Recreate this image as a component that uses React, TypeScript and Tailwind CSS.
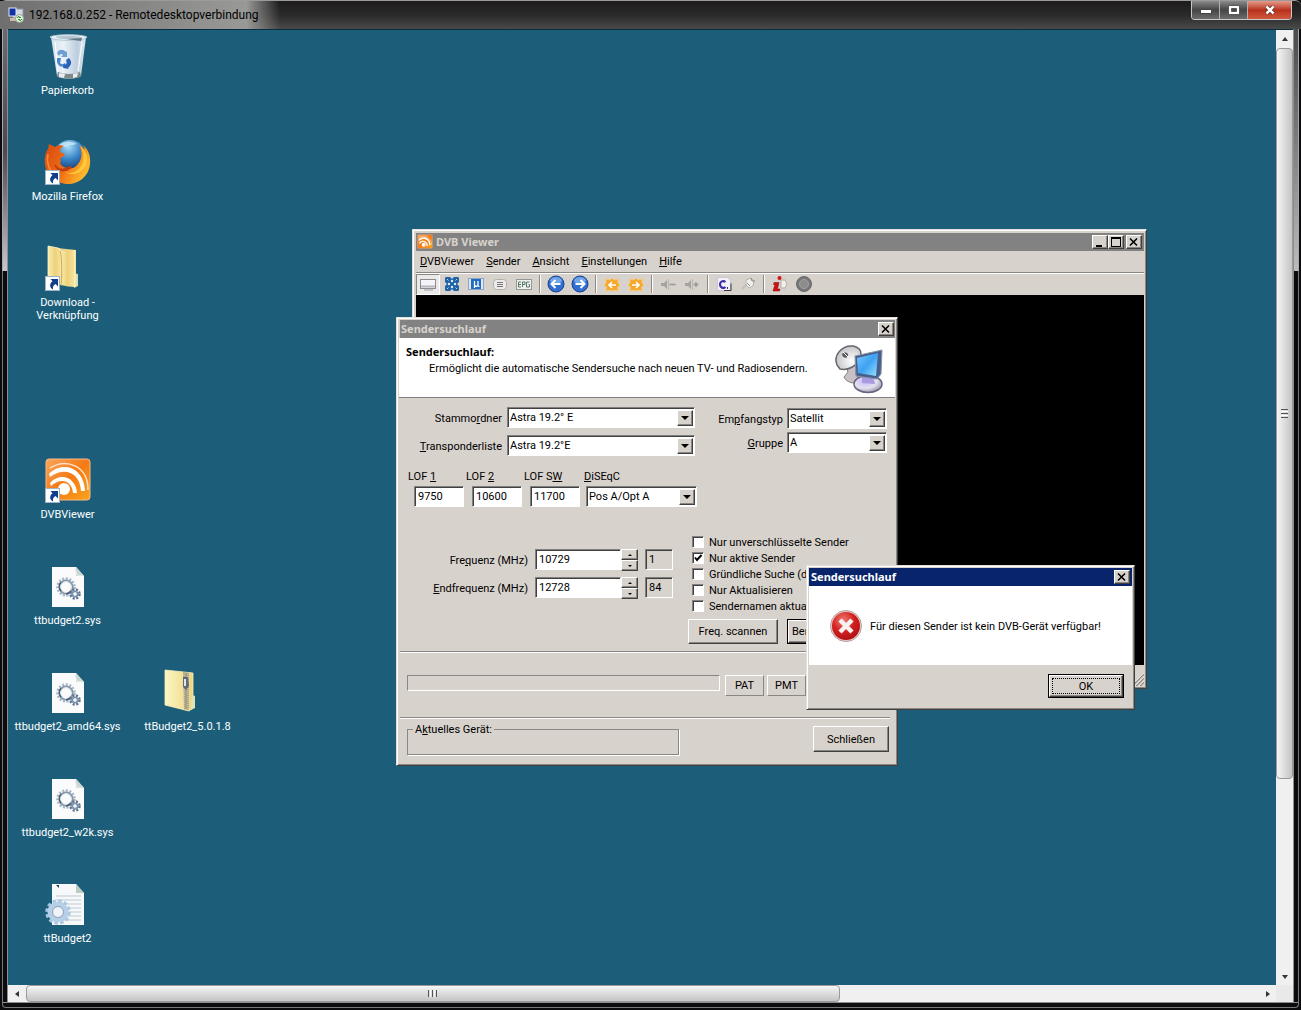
import React from "react";

const RAISED =
  "border border-t-white border-l-white border-r-[#404040] border-b-[#404040] shadow-[inset_-1px_-1px_0_#8a8681] bg-[#d8d2cc]";
const SUNKEN =
  "border border-t-[#808080] border-l-[#808080] border-r-white border-b-white shadow-[inset_1px_1px_0_#404040]";
const WINDOW =
  "absolute flex flex-col bg-[#d8d2cc] border border-t-[#e4e0dc] border-l-[#e4e0dc] border-r-[#404040] border-b-[#404040] shadow-[inset_1px_1px_0_#fff,inset_-1px_-1px_0_#8a8681] p-[2px]";
const BOLD = "font-['Noto_Sans','Liberation_Sans',sans-serif] font-bold";

/* Text with one underlined access key */
function Mn({ t, k }: { t: string; k: number }) {
  return (
    <span className="whitespace-pre">
      {t.slice(0, k)}
      <span className="underline underline-offset-1">{t[k]}</span>
      {t.slice(k + 1)}
    </span>
  );
}

/* ---------- desktop icons ---------- */

function ShortcutArrow() {
  return (
    <g>
      <rect x="1.5" y="31.500" width="14" height="14" fill="#fff" stroke="#9db4c4" />
      <path d="M6.500 34H14v7.500l-2.400-2.400c-2.300 1.200-3 3-2.500 5.400-3.400-1.500-4.200-5.600-.6-8.300z" fill="#123f8c" />
    </g>
  );
}

function BinIcon() {
  return (
    <svg viewBox="0 0 48 48" className="size-12">
      <defs>
        <linearGradient id="bin" x1="0" x2="1">
          <stop offset="0" stopColor="#d5e3ef" />
          <stop offset=".35" stopColor="#f4f8fc" />
          <stop offset=".75" stopColor="#c3d2e2" />
          <stop offset="1" stopColor="#e4edf4" />
        </linearGradient>
      </defs>
      <path d="M7 4l35 0-5 39c-4 3.500-20 3.500-24 0z" fill="url(#bin)" opacity=".96" />
      <path d="M14 39c5 2.500 17 2.500 22 0l1 4c-4 3.500-20 3.500-24 0z" fill="#7f8a8b" />
      <path d="M15 40l6 1-1 4-5-1zM29 41l5-1-1 4-4 1z" fill="#e9eef0" />
      <path d="M6 4c4-3 32-3 37 0-1 4-33 5-37 0z" fill="#eef5fa" stroke="#b1c4d4" />
      <path d="M11 4c5-1.500 22-2 28 .500-6 2.500-23 2.500-28-.5z" fill="#b4c6d3" />
      <path d="M22 6l16-1-1 3z" fill="#63767e" />
      <path d="M11 9l3 30M38 9l-4 29" stroke="#fff" strokeWidth="1.500" opacity=".8" />
      <path d="M13 20c2-4 6-4 9-1l1-1 0 6-6 0 2-2c-2-2-3-1-4 1z" fill="#6e9fd2" />
      <path d="M13 25l4 0-1 5c2 2 4 1 5 0l1 3c-4 2-8 0-9-4z" fill="#4a86cc" />
      <path d="M22 27l3-2c3 3 3 7-1 10l1 1-6-1 1-5 1 2c2-1 2-3 1-5z" fill="#2a62b8" />
    </svg>
  );
}

function FirefoxIcon() {
  return (
    <svg viewBox="0 0 48 48" className="size-12">
      <defs>
        <radialGradient id="globe" cx=".45" cy=".2" r=".8">
          <stop offset="0" stopColor="#a8dcf5" />
          <stop offset=".45" stopColor="#3a86c8" />
          <stop offset="1" stopColor="#10285f" />
        </radialGradient>
        <linearGradient id="fox" x1="0" y1="0" x2="1" y2=".4">
          <stop offset="0" stopColor="#d64a12" />
          <stop offset=".55" stopColor="#ef6c14" />
          <stop offset="1" stopColor="#fdb62b" />
        </linearGradient>
      </defs>
      <circle cx="26" cy="18" r="17" fill="url(#globe)" />
      <path d="M15 6c5-4 13-4 18-1-3 0-4 2-8 1-2 3-7 2-10 0z" fill="#d5effa" opacity=".7" />
      <path
        d="M5 5c2 1 4 2 6 3 3-2 6-2 9-1-3 1-4 3-4 6l5 2c-1 3-4 3-5 5 1 2 1 3 0 4 3 6 13 8 18 1 5-6 4-14 1-19 3 1 4 3 5 5 1-2 0-3-1-5 5 4 8 11 7 19-1 12-11 20-22 20C12 45 2 36 1 25 0 19 2 12 4 10z"
        fill="url(#fox)"
      />
      <path d="M36 7c5 7 5 17-1 23-4 4-10 5-14 3 7 4 15 2 20-5 4-7 2-16-5-21z" fill="#fdc93b" />
      <path d="M11 25c3 5 8 6 12 3 2-1 4-1 5 0-3 4-9 6-14 3-3-2-4-4-3-6z" fill="#c23c0d" />
      <path d="M4 15c-2 8 1 17 8 22" stroke="#f98a3a" strokeWidth="1.500" fill="none" />
      <ShortcutArrow />
    </svg>
  );
}

function FolderLinkIcon() {
  return (
    <svg viewBox="0 0 48 48" className="size-12">
      <defs>
        <linearGradient id="ff" x1="0" x2="1">
          <stop offset="0" stopColor="#fbeeb0" />
          <stop offset=".5" stopColor="#edd27c" />
          <stop offset="1" stopColor="#f7e6a0" />
        </linearGradient>
      </defs>
      <path d="M4 2l28 3v36l-28-4z" fill="#e7cf86" />
      <path d="M29 28l5 1v12l-4 2z" fill="#d9e0ad" />
      <path d="M4 1l10 2c3 1 4 4 4 8v29L4 36z" fill="url(#ff)" stroke="#fdf5cd" strokeWidth=".8" />
      <path d="M16 6l15-1v37c-5 0-9-1-14-2z" fill="url(#ff)" />
      <path d="M16 6c2 3 2 30 1 34" stroke="#c9a95a" fill="none" />
      <path d="M31 5v37" stroke="#fff6cf" />
      <ShortcutArrow />
    </svg>
  );
}

function ZipIcon() {
  return (
    <svg viewBox="0 0 48 48" className="size-12">
      <defs>
        <linearGradient id="zp" x1="0" x2="1">
          <stop offset="0" stopColor="#fdf6c4" />
          <stop offset="1" stopColor="#edd57f" />
        </linearGradient>
      </defs>
      <path d="M1 1l28 3v35l-4 3-24-6z" fill="url(#zp)" stroke="#fbf0bd" strokeWidth=".8" />
      <path d="M28 26l3 1v12l-4 2z" fill="#dfe4b5" />
      <path d="M19 3l6 1v37l-5-1z" fill="#a5a087" />
      <path d="M20 4v35M24 5v35" stroke="#efe6b8" strokeWidth="1" strokeDasharray="1 1" />
      <path d="M19 8h5l1 9-3 4-3-3z" fill="#5f6a78" />
      <path d="M20 10h2v7h-2z" fill="#dfe6ee" />
    </svg>
  );
}

function DvbIcon({ small }: { small?: boolean }) {
  return (
    <svg viewBox="0 0 48 48" className={small ? "size-4" : "size-12"}>
      <defs>
        <linearGradient id={small ? "dvs" : "dvl"} x1="0" y1="0" x2="1" y2="1">
          <stop offset="0" stopColor="#f9a65e" />
          <stop offset=".5" stopColor="#f47a14" />
          <stop offset="1" stopColor="#fba41c" />
        </linearGradient>
      </defs>
      <rect x="2" y="2" width="44" height="41" rx="3" fill={small ? "url(#dvs)" : "url(#dvl)"} stroke="#f7b98a" strokeWidth="1" />
      <path d="M5 17C17 4 40 9 41 34l-4 0C36 14 19 10 6 20z" fill="#fff" />
      <path d="M6 26C16 15 32 20 33 36l-4 0C28 24 17 20 7 29z" fill="#fff" />
      <path d="M6 11C22 1 44 8 44 33" stroke="#fde0c8" strokeWidth="1.500" fill="none" />
      <circle cx="20" cy="32" r="6" fill="#fff" />
      {!small && <ShortcutArrow />}
    </svg>
  );
}

function Gear({ x, y, r, c, d }: { x: number; y: number; r: number; c: string; d: string }) {
  return (
    <g fill="none">
      <circle cx={x} cy={y} r={r + 1.5} stroke={c} strokeWidth="2.500" strokeDasharray="2 1.600" />
      <circle cx={x} cy={y} r={r - 0.6} stroke={d} strokeWidth="2.400" />
      <circle cx={x} cy={y} r={r - 1.6} stroke="#e9f0f5" strokeWidth="1" />
    </g>
  );
}

function SysIcon() {
  return (
    <svg viewBox="0 0 48 48" className="size-12">
      <path d="M8 4h24l8 9v31H8z" fill="#fbfbfc" />
      <path d="M32 4l8 9h-8z" fill="#c9d6cf" />
      <path d="M31 5l2 7 6 1" fill="none" stroke="#e4ece8" />
      <Gear x={22} y={24} r={7} c="#a3b6c4" d="#8596ab" />
      <path d="M17 19a7 7 0 0 0 0 9M22 31a7 7 0 0 0 5-3" stroke="#4c5b70" strokeWidth="1.500" fill="none" />
      <Gear x={31} y={31} r={3} c="#5e7190" d="#7e93ae" />
    </svg>
  );
}

function InfIcon() {
  return (
    <svg viewBox="0 0 48 48" className="size-12">
      <path d="M8 3h24l8 9v32H8z" fill="#f6f8fa" />
      <path d="M32 3l8 9h-8z" fill="#bccbbf" />
      <path d="M12 15h25M12 19h25M12 23h25M12 27h25M12 31h25M12 35h25M12 39h25" stroke="#bcc8d2" />
      <path d="M12 4h3v3z" fill="#2b3a52" />
      <circle cx="14" cy="31" r="11" fill="none" stroke="#a9c6e0" strokeWidth="3.500" strokeDasharray="3.400 2.350" />
      <circle cx="14" cy="31" r="8" fill="#e6eef6" stroke="#b4cfe6" strokeWidth="5" />
      <circle cx="14" cy="31" r="5.500" fill="#f0f4f8" stroke="#8c9cc0" />
    </svg>
  );
}

const ICONS: { label: string; pos: string; icon: React.ReactNode }[] = [
  { label: "Papierkorb", pos: "col-start-1 row-start-1", icon: <BinIcon /> },
  { label: "Mozilla Firefox", pos: "col-start-1 row-start-2", icon: <FirefoxIcon /> },
  { label: "Download - Verknüpfung", pos: "col-start-1 row-start-3", icon: <FolderLinkIcon /> },
  { label: "DVBViewer", pos: "col-start-1 row-start-5", icon: <DvbIcon /> },
  { label: "ttbudget2.sys", pos: "col-start-1 row-start-6", icon: <SysIcon /> },
  { label: "ttbudget2_amd64.sys", pos: "col-start-1 row-start-7", icon: <SysIcon /> },
  { label: "ttBudget2_5.0.1.8", pos: "col-start-2 row-start-7", icon: <ZipIcon /> },
  { label: "ttbudget2_w2k.sys", pos: "col-start-1 row-start-8", icon: <SysIcon /> },
  { label: "ttBudget2", pos: "col-start-1 row-start-9", icon: <InfIcon /> },
];

function DesktopIcons() {
  return (
    <div className="grid auto-cols-[119px] grid-rows-[repeat(9,106px)] gap-x-px justify-start pt-[3px]">
      {ICONS.map((i) => (
        <button key={i.label} className={`flex flex-col items-center justify-start gap-[3px] text-white ${i.pos}`}>
          {i.icon}
          <span className={i.label.startsWith("Download") ? "w-16 leading-[13px]" : "whitespace-nowrap leading-[13px]"}>{i.label}</span>
        </button>
      ))}
    </div>
  );
}

/* ---------- classic caption buttons ---------- */

function CaptionButton({ kind, label }: { kind: "min" | "max" | "close"; label: string }) {
  return (
    <button aria-label={label} className={`flex h-[14px] w-4 items-center justify-center ${RAISED}`}>
      <svg viewBox="0 0 12 10" className="h-[10px] w-3" shapeRendering="crispEdges">
        {kind === "min" && <path d="M2 8h6v2H2z" />}
        {kind === "max" && <path d="M1 0h10v10H1zM2 2v7h8V2z" fillRule="evenodd" />}
        {kind === "close" && <path d="M2 1.500l7 7M9 1.500l-7 7" stroke="#000" strokeWidth="1.600" shapeRendering="auto" />}
      </svg>
    </button>
  );
}

/* ---------- DVB Viewer window ---------- */

function Sep() {
  return <span className="mx-[3px] h-[18px] w-[2px] border-l border-l-[#8a8681] border-r border-r-white" />;
}

function Arrow({ left }: { left?: boolean }) {
  return (
    <svg viewBox="0 0 18 18" className="size-[18px]">
      <circle cx="9" cy="9" r="8" fill="#2f6fd0" stroke="#1c3f95" />
      <ellipse cx="9" cy="5.500" rx="6" ry="3.500" fill="#8dbcf2" opacity=".7" />
      <path d={left ? "M13.500 9H5M8.500 5L4.500 9l4 4" : "M4.500 9H13M9.500 5l4 4-4 4"} stroke="#fff" strokeWidth="2" fill="none" />
    </svg>
  );
}

function Star({ left }: { left?: boolean }) {
  return (
    <svg viewBox="0 0 18 18" className="size-[18px]">
      <path d="M3 4l4 1L9 3l2 2 4-1v4l2 2-2.500 2 .5 4-4-1-2 1-2-1-4 1 .5-4L1 10l2-2z" fill="#f5a828" stroke="#f6c878" />
      <path d={left ? "M13 10H6M9 7l-3 3 3 3" : "M5 10h7M9 7l3 3-3 3"} stroke="#fff" strokeWidth="1.700" fill="none" />
    </svg>
  );
}

function Speaker({ plus }: { plus?: boolean }) {
  return (
    <svg viewBox="0 0 18 18" className="size-[18px]">
      <path d="M2 8h3l3-3v9l-3-3H2z" fill="#a5a29e" />
      <path d="M9.500 4v11" stroke="#b8b5b1" />
      <path d={plus ? "M10.500 9.500h5M13 7v5" : "M10.500 9.500h6"} stroke="#9a9793" strokeWidth="1.500" />
    </svg>
  );
}

const TOOLS: { label: string; on?: boolean; icon: React.ReactNode | null }[] = [
  {
    label: "Anzeige",
    on: true,
    icon: (
      <svg viewBox="0 0 18 18" className="size-[18px]">
        <rect x="1.500" y="4.500" width="15" height="9" fill="#f4f4f6" stroke="#8b8b93" />
        <path d="M2 11.500h14" stroke="#b5b5bd" strokeWidth="2" />
        <path d="M5 15h9" stroke="#9a9aa0" />
      </svg>
    ),
  },
  {
    label: "Vollbild",
    icon: (
      <svg viewBox="0 0 18 18" className="size-[18px]">
        <path d="M3 2h4l2 2 2-2h4l1 1v4l-2 2 2 2v4l-1 1h-4l-2-2-2 2H3l-1-1v-4l2-2-2-2V3z" fill="#1f62a8" />
        <circle cx="9" cy="6" r="1.200" fill="#e2ecf5" />
        <circle cx="9" cy="12" r="1.200" fill="#e2ecf5" />
        <circle cx="6" cy="9" r="1.200" fill="#e2ecf5" />
        <circle cx="12" cy="9" r="1.200" fill="#e2ecf5" />
        <path d="M4 4l1.500 1.500M14 4l-1.500 1.500M4 14l1.500-1.500M14 14l-1.500-1.500" stroke="#b9d2e8" />
      </svg>
    ),
  },
  {
    label: "Mini",
    icon: (
      <svg viewBox="0 0 18 18" className="size-[18px]">
        <rect x="1.500" y="3.500" width="15" height="11" fill="#dfe8f4" stroke="#8ea4c4" />
        <rect x="4" y="4" width="10" height="10" fill="#1f6bc0" />
        <path d="M7.500 6v7M7.500 10.500c1 1 3 1 3.500 0V6v5l1.500.500" stroke="#fff" strokeWidth="1.300" fill="none" />
      </svg>
    ),
  },
  {
    label: "Untertitel",
    icon: (
      <svg viewBox="0 0 18 18" className="size-[18px]">
        <rect x="2.500" y="4.500" width="13" height="10" rx="3" fill="#ecebea" stroke="#b3afab" />
        <path d="M6 7.500h6M6 9.500h6M6 11.500h6" stroke="#77747a" />
      </svg>
    ),
  },
  {
    label: "Programmführer",
    icon: (
      <svg viewBox="0 0 18 18" className="size-[18px]">
        <rect x="1.500" y="4.500" width="15" height="10" fill="#eef1ee" stroke="#8f9a94" />
        <path d="M6 7H3.500v5H6M3.500 9.500H6M7.500 12V7H10v2.500H7.500M14.500 7h-3v5h3V9.500h-1" stroke="#59786c" fill="none" />
      </svg>
    ),
  },
  { label: "", icon: null },
  { label: "Zurück", icon: <Arrow left /> },
  { label: "Vor", icon: <Arrow /> },
  { label: "", icon: null },
  { label: "Favorit zurück", icon: <Star left /> },
  { label: "Favorit vor", icon: <Star /> },
  { label: "", icon: null },
  { label: "Leiser", icon: <Speaker /> },
  { label: "Lauter", icon: <Speaker plus /> },
  { label: "", icon: null },
  {
    label: "Teletext",
    icon: (
      <svg viewBox="0 0 18 18" className="size-[18px]">
        <path d="M2.500 2.500h10l3 3v10h-13z" fill="#f3f1fa" stroke="#c9c5d5" />
        <path d="M10.500 7C8 5 5 6.500 5 9.500S8.500 14 10.500 12" stroke="#3b2ba8" strokeWidth="2.200" fill="none" />
        <path d="M12.500 12v2M9 15.500h7v-7" stroke="#35333c" fill="none" />
      </svg>
    ),
  },
  {
    label: "Optionen",
    icon: (
      <svg viewBox="0 0 18 18" className="size-[18px]">
        <path d="M3 14l5-5" stroke="#c2bfbb" strokeWidth="2" />
        <path d="M7 5l5-2 3 3-1 5-4 2-3-3z" fill="#f1efed" stroke="#b6b2ae" />
        <path d="M12 3l1 3 3 0M8 8l3 3" stroke="#8d8985" fill="none" />
      </svg>
    ),
  },
  { label: "", icon: null },
  {
    label: "Information",
    icon: (
      <svg viewBox="0 0 18 18" className="size-[18px]">
        <path d="M10 5l4 0 2 4-2 4-4 0z" fill="#f2eeec" stroke="#b3aeaa" />
        <circle cx="8.500" cy="3" r="2" fill="#d01212" />
        <path d="M3 7.500h5L6.500 14H9l-.5 2H2l2-6.500H2.500z" fill="#d01212" stroke="#7c0808" strokeWidth=".5" />
      </svg>
    ),
  },
  {
    label: "Aufnahme",
    icon: (
      <svg viewBox="0 0 18 18" className="size-[18px]">
        <circle cx="9" cy="9" r="7.500" fill="#777" stroke="#6a6a6a" />
        <circle cx="9" cy="9" r="4.500" fill="#8c8c8c" stroke="#a3a3a3" />
      </svg>
    ),
  },
];

const MENU: [string, number][] = [
  ["DVBViewer", 0],
  ["Sender", 0],
  ["Ansicht", 0],
  ["Einstellungen", 0],
  ["Hilfe", 0],
];

function ViewerWindow() {
  return (
    <section className={`${WINDOW} left-[404px] top-[199px] h-[460px] w-[735px]`}>
      <header className={`ml-px mt-px flex h-[18px] items-center gap-[3px] bg-[#828282] pl-px pr-[2px] text-[#d8d2cc] ${BOLD}`}>
        <DvbIcon small />
        <h2 className="flex-1 pb-[2px]">DVB Viewer</h2>
        <div className="flex">
          <CaptionButton kind="min" label="Minimieren" />
          <CaptionButton kind="max" label="Maximieren" />
          <span className="w-[2px]" />
          <CaptionButton kind="close" label="Schließen" />
        </div>
      </header>
      <nav className="flex h-[21px] items-center gap-3 pb-px pl-[5px]">
        {MENU.map(([t, k]) => (
          <button key={t}>
            <Mn t={t} k={k} />
          </button>
        ))}
      </nav>
      <div className="ml-px flex h-[23px] items-center border-t border-t-[#8a8681] shadow-[inset_0_1px_0_#fff]">
        {TOOLS.map((b, i) =>
          b.icon ? (
            <button
              key={i}
              aria-label={b.label}
              className={
                b.on
                  ? "flex h-[21px] w-6 items-center justify-center border border-t-[#8a8681] border-l-[#8a8681] border-r-white border-b-white bg-[#eceae8]"
                  : "flex h-[21px] w-6 items-center justify-center"
              }
            >
              {b.icon}
            </button>
          ) : (
            <Sep key={i} />
          ),
        )}
      </div>
      <div className="ml-px flex-1 bg-black" />
      <footer className="flex h-[21px] items-end justify-end">
        <svg viewBox="0 0 14 14" className="size-[14px]">
          <path d="M2 14L14 2M6 14l8-8M10 14l4-4" stroke="#8a8681" strokeWidth="1.500" />
          <path d="M1 14L14 1M5 14l9-9M9 14l5-5" stroke="#fff" strokeWidth=".7" />
        </svg>
      </footer>
    </section>
  );
}

/* ---------- form controls ---------- */

function Combo({ id, value, className }: { id: string; value: string; className: string }) {
  return (
    <div className={`relative flex h-[21px] bg-white ${SUNKEN} ${className}`}>
      <select id={id} defaultValue={value} className="w-full appearance-none bg-transparent pl-[2px] outline-none">
        <option>{value}</option>
      </select>
      <span className={`pointer-events-none absolute bottom-px right-px top-[2px] flex w-4 items-center justify-center ${RAISED}`}>
        <svg viewBox="0 0 8 4" className="h-1 w-2">
          <path d="M0 0h8L4 4z" />
        </svg>
      </span>
    </div>
  );
}

function TextBox({ id, value, className }: { id: string; value: string; className: string }) {
  return <input id={id} type="text" defaultValue={value} className={`h-[21px] bg-white pl-[3px] outline-none ${SUNKEN} ${className}`} />;
}

function FreqRow({ id, label, k, value, index }: { id: string; label: string; k: number; value: string; index: string }) {
  return (
    <div className="flex h-7 items-start">
      <label htmlFor={id} className="mr-[7px] w-[129px] text-right leading-6">
        <Mn t={label} k={k} />
      </label>
      <TextBox id={id} value={value} className="w-[86px]" />
      <div className="mr-[7px] flex w-[17px] flex-col">
        <button aria-label="Erhöhen" className={`flex h-[11px] items-center justify-center ${RAISED}`}>
          <svg viewBox="0 0 4 2" className="h-[2px] w-1"><path d="M0 2h4L2 0z" /></svg>
        </button>
        <button aria-label="Verringern" className={`flex h-[11px] items-center justify-center ${RAISED}`}>
          <svg viewBox="0 0 4 2" className="h-[2px] w-1"><path d="M0 0h4L2 2z" /></svg>
        </button>
      </div>
      <output className={`h-[21px] w-7 pl-[3px] leading-5 ${SUNKEN}`}>{index}</output>
    </div>
  );
}

const CHECKS: [string, boolean][] = [
  ["Nur unverschlüsselte Sender", false],
  ["Nur aktive Sender", true],
  ["Gründliche Suche (da", false],
  ["Nur Aktualisieren", false],
  ["Sendernamen aktua", false],
];

const LOFS: [string, number, string, string][] = [
  ["LOF 1", 4, "9750", "lof1"],
  ["LOF 2", 4, "10600", "lof2"],
  ["LOF SW", 5, "11700", "lofsw"],
];

function SatelliteIcon() {
  return (
    <svg viewBox="0 0 52 52" className="size-[52px]">
      <defs>
        <radialGradient id="dish" cx=".65" cy=".65" r=".8">
          <stop offset="0" stopColor="#fff" />
          <stop offset="1" stopColor="#b9b7bd" />
        </radialGradient>
        <linearGradient id="scr" x1="0" y1="0" x2="1" y2="1">
          <stop offset="0" stopColor="#7cc9fb" />
          <stop offset=".5" stopColor="#3da2f2" />
          <stop offset="1" stopColor="#9be4fd" />
        </linearGradient>
        <radialGradient id="foot" cx=".4" cy=".35" r=".8">
          <stop offset="0" stopColor="#c9b8fa" />
          <stop offset=".5" stopColor="#e4e2ee" />
          <stop offset="1" stopColor="#77758c" />
        </radialGradient>
      </defs>
      <path d="M12 23l10 0v9l6 6c-5 4-16 2-18-4l4-5z" fill="#c9c0c6" stroke="#8b8187" />
      <path d="M3 22C-1 12 8 2 19 3c8 2 9 6 7 12-3 8-12 13-20 11z" fill="url(#dish)" stroke="#67656c" strokeWidth="1.500" />
      <path d="M8 11c3-3 7-1 6 2s-6 2-6-2z" fill="#5c5a60" />
      <path d="M9 9l5 5" stroke="#fff" strokeWidth="1" />
      <ellipse cx="34" cy="41" rx="14" ry="8.500" fill="url(#foot)" stroke="#66647e" strokeWidth="1.500" />
      <path d="M28 33h11l2 8-13-1z" fill="#a99be0" />
      <path d="M21 13l27-6-1 24-4 5-21-3z" fill="#475f8c" stroke="#8a93a6" />
      <path d="M23 15l21-5-2 23-18-3z" fill="url(#scr)" />
    </svg>
  );
}

function ScanDialog() {
  return (
    <section className={`${WINDOW} left-[388px] top-[287px] w-[502px]`}>
      <header className={`ml-px flex h-[18px] items-center bg-[#828282] pl-px pr-px text-[#d8d2cc] ${BOLD}`}>
        <h2 className="flex-1 pb-px">Sendersuchlauf</h2>
        <CaptionButton kind="close" label="Schließen" />
      </header>
      <div className="flex h-[60px] justify-between border-b border-b-[#808080] bg-white pl-[7px] pr-[9px]">
        <div className="pt-[6px]">
          <h3 className={`leading-4 ${BOLD}`}>Sendersuchlauf:</h3>
          <p className="pl-[23px] leading-[18px]">Ermöglicht die automatische Sendersuche nach neuen TV- und Radiosendern.</p>
        </div>
        <div className="pt-[5px]">
          <SatelliteIcon />
        </div>
      </div>

      <form className="flex flex-col" onSubmit={(e) => e.preventDefault()}>
        <div className="flex justify-between pl-[7px] pr-2 pt-[9px]">
          <div className="grid grid-cols-[96px_188px] gap-x-[5px] gap-y-[5px]">
            <label htmlFor="root" className="text-right leading-[23px]"><Mn t="Stammordner" k={6} /></label>
            <Combo id="root" value="Astra 19.2° E" className="w-full" />
            <label htmlFor="list" className="text-right leading-[23px]"><Mn t="Transponderliste" k={0} /></label>
            <Combo id="list" value="Astra 19.2°E" className="w-full" />
          </div>
          <div className="grid grid-cols-[72px_100px] content-start gap-x-1 gap-y-px pt-px">
            <label htmlFor="type" className="text-right leading-[23px]"><Mn t="Empfangstyp" k={2} /></label>
            <Combo id="type" value="Satellit" className="w-full" />
            <label htmlFor="group" className="text-right leading-[23px]"><Mn t="Gruppe" k={0} /></label>
            <Combo id="group" value="A" className="w-full" />
          </div>
        </div>

        <div className="flex pl-[9px] pt-[11px]">
          {LOFS.map(([t, k, v, id]) => (
            <div key={id} className="flex w-[58px] flex-col">
              <label htmlFor={id} className="pb-[2px] leading-[15px]"><Mn t={t} k={k} /></label>
              <TextBox id={id} value={v} className="ml-[6px] w-[50px]" />
            </div>
          ))}
          <div className="flex flex-col pl-[2px]">
            <label htmlFor="diseqc" className="pb-[2px] leading-[15px]"><Mn t="DiSEqC" k={0} /></label>
            <Combo id="diseqc" value="Pos A/Opt A" className="ml-[2px] w-[111px]" />
          </div>
        </div>

        <div className="flex pt-[27px]">
          <div className="pt-[15px]">
            <FreqRow id="freq" label="Frequenz (MHz)" k={3} value="10729" index="1" />
            <FreqRow id="end" label="Endfrequenz (MHz)" k={0} value="12728" index="84" />
          </div>
          <div className="pl-[15px]">
            {CHECKS.map(([t, c]) => (
              <label key={t} className="ml-1 flex h-4 items-center gap-[5px] whitespace-nowrap">
                <span className={`relative flex size-3 bg-white ${SUNKEN}`}>
                  <input type="checkbox" defaultChecked={c} className="peer absolute inset-0 appearance-none" />
                  <svg viewBox="0 0 10 10" className="pointer-events-none invisible size-[10px] peer-checked:visible">
                    <path d="M2 4.500l2 2.500 4.500-5" stroke="#000" strokeWidth="2" fill="none" />
                  </svg>
                </span>
                {t}
              </label>
            ))}
            <div className="flex gap-[9px] pt-[5px]">
              <button className={`h-[25px] w-[90px] ${RAISED}`}>Freq. scannen</button>
              <div className="border border-black">
                <button className={`h-[23px] w-[90px] pl-[3px] text-left ${RAISED}`}>Ber</button>
              </div>
            </div>
          </div>
        </div>

        <hr className="mx-px mr-[5px] mt-[7px] border-t border-t-[#8a8681] shadow-[0_1px_0_#fff]" />

        <div className="flex items-start gap-[3px] pl-2 pt-[23px]">
          <div role="progressbar" aria-label="Fortschritt" className="mr-[2px] h-[16px] w-[313px] border border-t-[#8a8681] border-l-[#8a8681] border-r-white border-b-white" />
          <button className="h-[21px] w-[39px] border border-t-white border-l-white border-r-[#8a8681] border-b-[#8a8681]">PAT</button>
          <button className="h-[21px] w-[39px] border border-t-white border-l-white border-r-[#8a8681] border-b-[#8a8681]">PMT</button>
        </div>

        <hr className="mx-px mr-[5px] mt-[21px] border-t border-t-[#8a8681] shadow-[0_1px_0_#fff]" />

        <div className="flex items-start justify-between pb-2 pl-2 pr-[6px] pt-[5px]">
          <fieldset className="h-[32px] w-[272px] border border-[#8a8681] px-[5px] shadow-[1px_1px_0_#fff]">
            <legend className="bg-[#d8d2cc] px-[2px] leading-[13px]"><Mn t="Aktuelles Gerät:" k={1} /></legend>
          </fieldset>
          <button className={`mt-[3px] h-[26px] w-[76px] ${RAISED}`}>Schließen</button>
        </div>
      </form>
    </section>
  );
}

function ErrorDialog() {
  return (
    <section role="alertdialog" aria-labelledby="err-title" className={`${WINDOW} left-[798px] top-[535px] w-[329px]`}>
      <header className={`flex h-[18px] items-center bg-[#08246b] pl-[2px] pr-[2px] text-white ${BOLD}`}>
        <h2 id="err-title" className="flex-1 pb-px">Sendersuchlauf</h2>
        <CaptionButton kind="close" label="Schließen" />
      </header>
      <div className="flex h-[79px] items-center gap-2 bg-white pl-[21px]">
        <svg viewBox="0 0 32 32" className="size-8">
          <defs>
            <radialGradient id="err" cx=".4" cy=".3" r=".8">
              <stop offset="0" stopColor="#ef7d74" />
              <stop offset=".5" stopColor="#d2201f" />
              <stop offset="1" stopColor="#a80d12" />
            </radialGradient>
          </defs>
          <circle cx="16" cy="16" r="15.500" fill="#e9c9c9" stroke="#b9a0a0" />
          <circle cx="16" cy="16" r="14" fill="url(#err)" />
          <path d="M10 10l12 12M22 10L10 22" stroke="#f7f2f2" strokeWidth="4.500" />
        </svg>
        <p className="pt-[2px]">Für diesen Sender ist kein DVB-Gerät verfügbar!</p>
      </div>
      <div className="flex justify-end px-2 pb-[9px] pt-[9px]">
        <div className="border border-black">
          <button className={`flex h-[22px] w-[74px] p-[2px] ${RAISED}`}>
            <span className="flex size-full items-center justify-center border border-dotted border-black">OK</span>
          </button>
        </div>
      </div>
    </section>
  );
}

/* ---------- remote desktop frame ---------- */

function Tri({ d }: { d: string }) {
  return (
    <svg viewBox="0 0 8 8" className="size-2">
      <path d={d} fill="#333" />
    </svg>
  );
}

export default function App() {
  return (
    <main className="flex h-screen flex-col overflow-hidden bg-[#0c0c0e] font-['Roboto','Liberation_Sans',sans-serif] text-[11px] leading-[13px] text-black">
      <header className="flex h-[29px] items-start justify-between rounded-t-md border-t border-t-[#9b9b9b] bg-linear-to-b from-[#1d1b1c] via-[#2b2a2a] to-[#4a4a4b] pr-[9px]">
        <div className="flex h-7 w-[280px] items-center gap-[5px] bg-linear-to-r from-[#6f6f6f] via-[#999997] via-88% to-transparent pl-2 text-xs text-black">
          <svg viewBox="0 0 16 16" className="size-4">
            <rect x="5" y="2" width="10" height="9" fill="#d5d9e0" stroke="#8b93a0" />
            <rect x="1" y="1" width="7" height="8" fill="#1230a8" stroke="#dfe6f5" />
            <rect x="2" y="11" width="6" height="3" fill="#cbb9ae" />
            <circle cx="11.500" cy="11.500" r="4" fill="#e8f4e6" stroke="#8ca48a" />
            <path d="M9 11l2-2v1.500h2M14 12l-2 2v-1.500h-2" stroke="#2c8f2a" fill="none" />
          </svg>
          <h1>192.168.0.252 - Remotedesktopverbindung</h1>
        </div>
        <div className="flex h-[19px] overflow-hidden rounded-b border border-t-0 border-[#c9c9c9]">
          <button aria-label="Minimieren" className="flex w-7 items-center justify-center border-r border-r-[#b0b0b0] bg-linear-to-b from-[#8a8a8a] via-[#454545] to-[#6d6d6d]">
            <svg viewBox="0 0 12 8" className="h-2 w-3"><rect x=".5" y="3.500" width="11" height="4" fill="#fff" stroke="#444" /></svg>
          </button>
          <button aria-label="Maximieren" className="flex w-7 items-center justify-center border-r border-r-[#b0b0b0] bg-linear-to-b from-[#8a8a8a] via-[#454545] to-[#6d6d6d]">
            <svg viewBox="0 0 12 10" className="h-[10px] w-3"><path d="M0.500 .5h11v9H.5zM3.500 3.500v3h5v-3z" fill="#fff" fillRule="evenodd" stroke="#444" strokeWidth=".8" /></svg>
          </button>
          <button aria-label="Schließen" className="flex w-[43px] items-center justify-center bg-linear-to-b from-[#e39a8a] via-[#b8301c] to-[#d0583c]">
            <svg viewBox="0 0 12 10" className="h-[10px] w-3">
              <path d="M2.500 1.500l7 7M9.500 1.500l-7 7" stroke="#5a2a22" strokeWidth="4" />
              <path d="M2.500 1.500l7 7M9.500 1.500l-7 7" stroke="#fff" strokeWidth="2.500" />
            </svg>
          </button>
        </div>
      </header>

      <div className="flex min-h-0 flex-1">
        <div className="flex w-2 flex-col border-r border-r-[#8b8d92] pl-[2px]">
          <div className="h-[242px] border-l border-l-[#a8a8aa] bg-linear-to-b from-[#6b6a6e] via-[#4c4a50] to-[#c9c6cc]" />
          <div className="flex-1 border-l border-l-[#77777c]" />
        </div>

        <div className="flex min-w-0 flex-1 flex-col border-t border-t-[#0b2c3c]">
          <div className="flex min-h-0 flex-1">
            <div className="relative min-w-0 flex-1 overflow-hidden bg-[#1c5e7a]">
              <DesktopIcons />
              <ViewerWindow />
              <ScanDialog />
              <ErrorDialog />
            </div>
            <div className="flex w-[17px] flex-col bg-[#f0f0f0]">
              <button aria-label="Nach oben" className="flex h-[18px] items-center justify-center"><Tri d="M1 6l3-4 3 4z" /></button>
              <div className="min-h-0 flex-1">
                <div className="flex h-[79.5%] flex-col items-center justify-center gap-px rounded-sm border border-[#9a9a9a] bg-linear-to-r from-[#f6f6f6] to-[#c4c4c6]">
                  <span className="h-px w-[7px] bg-[#555]" />
                  <span className="h-px w-[7px] bg-white" />
                  <span className="h-px w-[7px] bg-[#555]" />
                  <span className="h-px w-[7px] bg-white" />
                  <span className="h-px w-[7px] bg-[#555]" />
                </div>
              </div>
              <button aria-label="Nach unten" className="flex h-[17px] items-center justify-center"><Tri d="M1 2l3 4 3-4z" /></button>
            </div>
          </div>
          <div className="flex h-[17px] bg-[#f0f0f0]">
            <button aria-label="Nach links" className="flex w-[18px] items-center justify-center"><Tri d="M6 1L2 4l4 3z" /></button>
            <div className="min-w-0 flex-1">
              <div className="flex h-full w-[66%] items-center justify-center gap-px rounded-sm border border-[#9a9a9a] bg-linear-to-b from-[#f6f6f6] to-[#c4c4c6]">
                <span className="h-[7px] w-px bg-[#555]" />
                <span className="h-[7px] w-px bg-white" />
                <span className="h-[7px] w-px bg-[#555]" />
                <span className="h-[7px] w-px bg-white" />
                <span className="h-[7px] w-px bg-[#555]" />
              </div>
            </div>
            <button aria-label="Nach rechts" className="flex w-[17px] items-center justify-center"><Tri d="M2 1l4 3-4 3z" /></button>
            <div className="w-[17px] bg-[#e9e9ea]" />
          </div>
        </div>

        <div className="flex w-2 flex-col border-l border-l-[#8b8d92] pr-[2px]">
          <div className="h-[242px] border-r border-r-[#a8a8aa] bg-linear-to-b from-[#4b4b4d] to-[#bcbcbe]" />
          <div className="flex-1 border-r border-r-[#77777c]" />
        </div>
      </div>
      <footer className="mx-[2px] h-[6px] rounded-b border-x border-b border-x-[#77777c] border-b-[#77777c] shadow-[inset_0_1px_0_#8b8d92]" />
      <div className="h-[2px]" />
    </main>
  );
}
